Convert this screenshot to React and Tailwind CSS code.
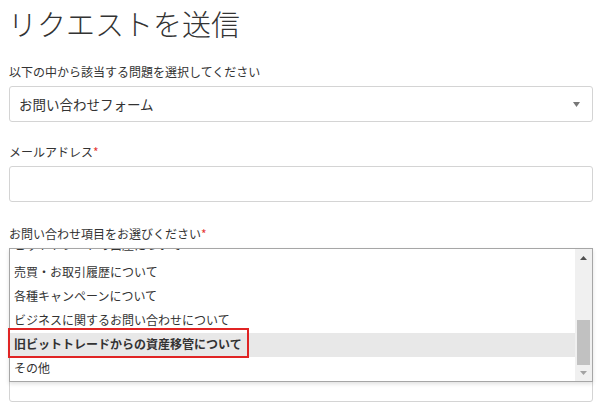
export default function App() {
  const font = { fontFamily: '"Noto Sans CJK JP", "Noto Sans", sans-serif' };
  const items = [
    "ビットトレードの口座について",
    "売買・お取引履歴について",
    "各種キャンペーンについて",
    "ビジネスに関するお問い合わせについて",
    "旧ビットトレードからの資産移管について",
    "その他",
  ];
  return (
    <div className="w-[611px] h-[410px] overflow-hidden bg-white text-[#333]" style={font}>
      <div className="pl-[9px] w-[593px]">
        <h1 className="text-[29px] font-light leading-[40px] pt-[3px] -ml-[1px] text-[#333]">リクエストを送信</h1>
        <div className="mt-[20px] text-[12px] leading-[18px]">以下の中から該当する問題を選択してください</div>
        <div className="mt-[5px] h-[36px] border border-[#d4d4d4] rounded-[3px] flex items-center justify-between pl-[9px] pr-[12px]">
          <span className="text-[13.5px]">お問い合わせフォーム</span>
          <svg width="7" height="5" viewBox="0 0 7 5"><path d="M0 0h7L3.5 5z" fill="#777" /></svg>
        </div>
        <div className="mt-[21px] text-[12px] leading-[18px]">
          メールアドレス<span className="text-[#e53935]">*</span>
        </div>
        <div className="mt-[5px] h-[36px] border border-[#d4d4d4] rounded-[3px]" />
        <div className="mt-[23px] text-[12px] leading-[18px]">
          お問い合わせ項目をお選びください<span className="text-[#e53935]">*</span>
        </div>
        <div className="relative mt-[5px] h-[154px] border border-[#d4d4d4] rounded-[3px]">
          <div className="absolute -left-[1px] -top-[1px] w-[584px] h-[134px] border border-[#a6a6a6] bg-white shadow-[0_2px_4px_rgba(0,0,0,0.12)] flex overflow-hidden">
            <div className="flex-1 overflow-hidden">
              <div className="-mt-[12px]">
                {items.map((t, i) => (
                  <div
                    key={i}
                    className={
                      "h-[24px] flex items-center pl-[4px] text-[12px] " +
                      (i === 0 ? "pb-[9px] " : "pb-[3px] ") +
                      (i === 4 ? "bg-[#e8e8e8] font-bold" : "")
                    }
                  >
                    {t}
                  </div>
                ))}
              </div>
            </div>
            <div className="w-[17px] bg-[#f0f0f0] flex flex-col items-center">
              <div className="h-[17px] flex items-center justify-center">
                <svg width="7" height="4" viewBox="0 0 7 4"><path d="M3.5 0L7 4H0z" fill="#505050" /></svg>
              </div>
              <div className="mt-[54px] w-[13px] h-[45px] bg-[#c1c1c1]" />
              <div className="flex-1 flex items-center justify-center">
                <svg width="7" height="4" viewBox="0 0 7 4"><path d="M0 0h7L3.5 4z" fill="#a3a3a3" /></svg>
              </div>
            </div>
          </div>
          <div className="absolute -left-[2px] top-[79px] w-[241px] h-[30px] border-2 border-[#e02424]" />
        </div>
      </div>
    </div>
  );
}
